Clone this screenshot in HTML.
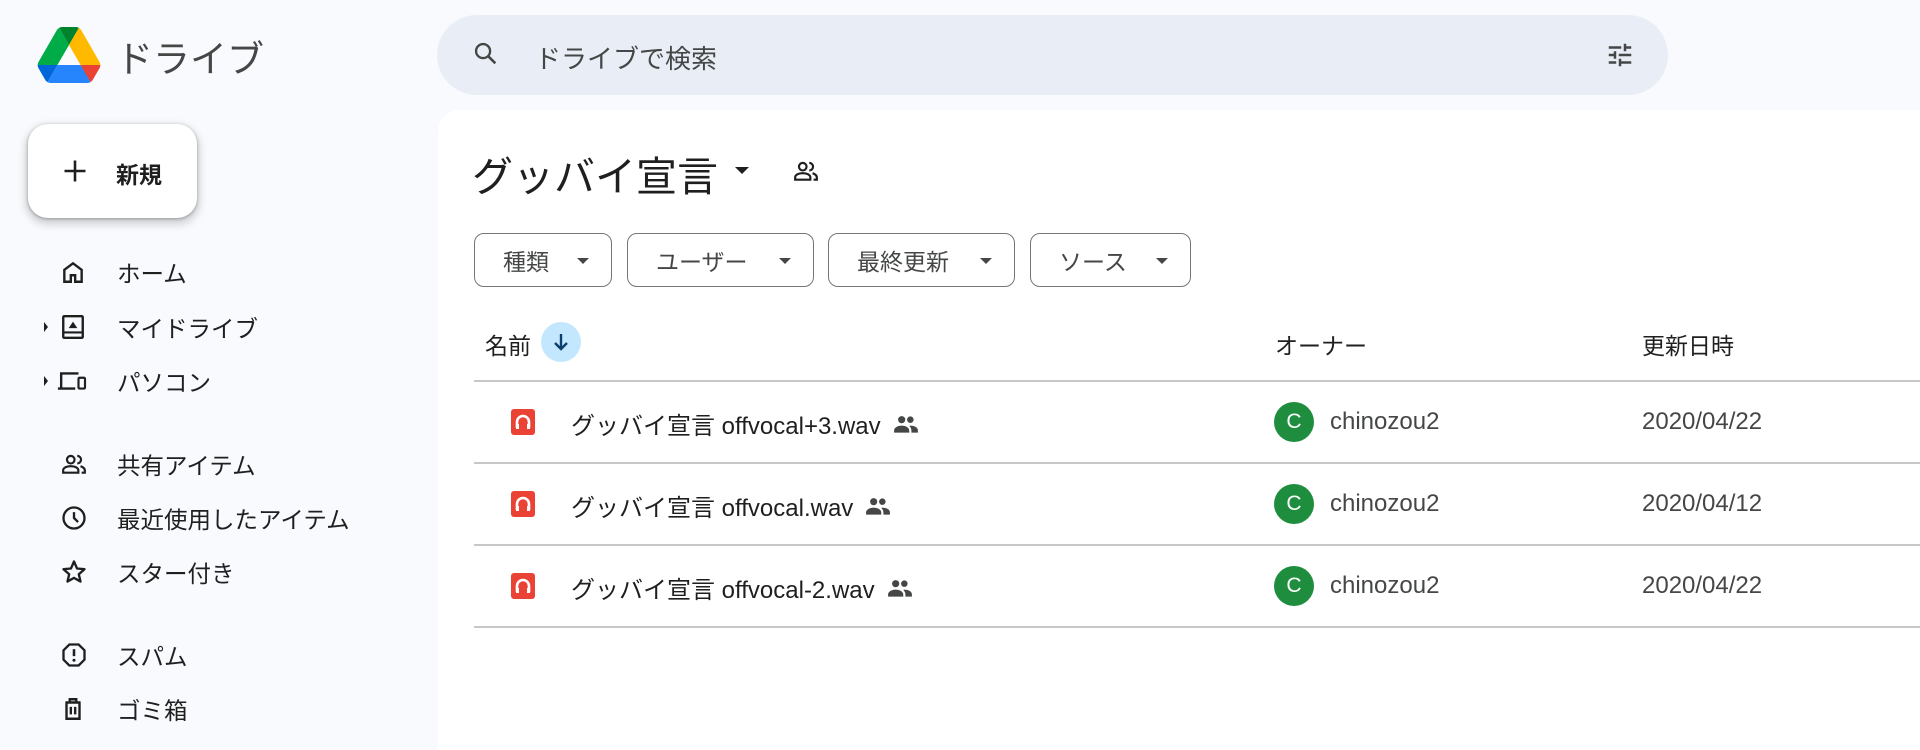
<!DOCTYPE html>
<html><head><meta charset="utf-8"><style>
*{margin:0;padding:0;box-sizing:border-box}
body{width:1920px;height:730px;overflow:hidden;background:#f8fafd;font-family:"Liberation Sans","Noto Sans CJK JP",sans-serif;color:#1f1f1f;position:relative}
.a{position:absolute}
.nav{position:absolute;left:0;height:40px;display:flex;align-items:center;font-size:23.5px;color:#1f1f1f}
.nav svg{position:absolute;left:60px}
.nav span{position:absolute;left:117px;white-space:nowrap}
.chip{position:absolute;top:233px;height:54px;border:1.5px solid #747775;border-radius:10px;font-size:23px;color:#444746;display:flex;align-items:center;padding-left:28px}
.chip i{position:absolute;right:22px;top:24px;border-left:6px solid transparent;border-right:6px solid transparent;border-top:6px solid #444746}
.line{position:absolute;left:474px;right:0;height:1.5px;background:#c7c7c7}
.fn{position:absolute;left:571px;font-size:24px;color:#1f1f1f;white-space:nowrap;display:flex;align-items:center;gap:12px}
.fi{position:absolute;left:511px;width:24px;height:26px;background:#ea4335;border-radius:3px}
.av{position:absolute;left:1274px;width:40px;height:40px;border-radius:50%;background:#1e8e3e;color:#fff;font-size:21px;display:flex;align-items:center;justify-content:center}
.ow{position:absolute;left:1330px;font-size:24px;color:#444746}
.dt{position:absolute;left:1642px;font-size:24px;color:#444746}
</style></head><body>
<svg class="a" style="left:37px;top:27px" width="64" height="56" viewBox="0 0 87.3 78"><path d="M6.6 66.85l3.850 6.65c.8 1.4 1.95 2.5 3.3 3.3L27.5 53H0c0 1.55.4 3.1 1.2 4.5z" fill="#0066da"/><path d="M43.65 25L29.9 1.2c-1.35.8-2.5 1.9-3.3 3.3L1.2 48.5A9 9 0 000 53h27.5z" fill="#00ac47"/><path d="M73.55 76.8c1.35-.8 2.5-1.9 3.3-3.3l1.6-2.75 7.65-13.25c.8-1.4 1.2-2.950 1.2-4.5H59.8l5.85 11.5z" fill="#ea4335"/><path d="M43.65 25L57.4 1.2C56.05.4 54.5 0 52.9 0H34.4c-1.6 0-3.15.45-4.5 1.2z" fill="#00832d"/><path d="M59.8 53H27.5L13.75 76.8c1.35.8 2.9 1.2 4.5 1.2h50.8c1.6 0 3.15-.45 4.5-1.2z" fill="#2684fc"/><path d="M73.4 26.5L60.7 4.5c-.8-1.4-1.95-2.5-3.3-3.3L43.65 25 59.8 53h27.45c0-1.55-.4-3.1-1.2-4.5z" fill="#ffba00"/></svg>
<div class="a" style="left:116px;top:29px;font-size:37px;color:#444746">ドライブ</div>
<div class="a" style="left:437px;top:15px;width:1231px;height:80px;border-radius:40px;background:#e9eef6"></div>
<svg class="a" style="left:472px;top:40px" width="28" height="28" viewBox="0 0 24 24"><circle cx="9.5" cy="9.5" r="6" fill="none" stroke="#444746" stroke-width="2"/><path d="M14 14l6 6" stroke="#444746" stroke-width="2.2"/></svg>
<div class="a" style="left:535px;top:39px;font-size:26px;color:#444746">ドライブで検索</div>
<svg class="a" style="left:1605px;top:40px" width="30" height="30" viewBox="0 0 24 24" fill="#444746"><path d="M3 17v2h6v-2zm0-12v2h10V5zm10 16v-2h8v-2h-8v-2h-2v6zM7 9v2H3v2h4v2h2V9zm14 4v-2H11v2zm-6-4h2V7h4V5h-4V3h-2z"/></svg>
<div class="a" style="left:438px;top:110px;width:1500px;height:640px;background:#fff;border-radius:22px 0 0 0"></div>
<div class="a" style="left:28px;top:124px;width:169px;height:94px;background:#fff;border-radius:20px;box-shadow:0 1px 3px rgba(0,0,0,.3),0 4px 8px 3px rgba(0,0,0,.15)"></div>
<svg class="a" style="left:61px;top:157px" width="28" height="28" viewBox="0 0 24 24"><path d="M12 3v18M3 12h18" stroke="#1f1f1f" stroke-width="2.2"/></svg>
<div class="a" style="left:116px;top:156px;font-size:23px;font-weight:bold;color:#1f1f1f">新規</div>

<div class="nav" style="top:252px"><svg width="26" height="26" viewBox="0 0 24 24"><path d="M4 21V10l8-6 8 6v11h-6v-6h-4v6z" fill="none" stroke="#1f1f1f" stroke-width="2.2"/></svg><span>ホーム</span></div>
<div class="nav" style="top:307px"><i class="a" style="left:44px;top:15px;border-top:5px solid transparent;border-bottom:5px solid transparent;border-left:4px solid #1f1f1f"></i><svg width="26" height="26" viewBox="0 0 24 24"><rect x="3" y="2" width="18" height="20" rx="1" fill="none" stroke="#1f1f1f" stroke-width="2.2"/><path d="M3 17h18" stroke="#1f1f1f" stroke-width="2"/><path d="M8 13l4-6 4 6z" fill="#1f1f1f"/></svg><span>マイドライブ</span></div>
<div class="nav" style="top:361px"><i class="a" style="left:44px;top:15px;border-top:5px solid transparent;border-bottom:5px solid transparent;border-left:4px solid #1f1f1f"></i><svg width="32" height="26" viewBox="0 0 28 24" style="left:56px"><path d="M4 18V5h16M1 19h16" fill="none" stroke="#1f1f1f" stroke-width="2.2"/><rect x="20" y="9" width="6" height="10" rx="1" fill="none" stroke="#1f1f1f" stroke-width="2"/></svg><span>パソコン</span></div>
<div class="nav" style="top:444px"><svg width="28" height="26" viewBox="0 0 24 24"><circle cx="9" cy="8" r="3.5" fill="none" stroke="#1f1f1f" stroke-width="2"/><path d="M2 20v-2c0-2.5 3-4 7-4s7 1.5 7 4v2z" fill="none" stroke="#1f1f1f" stroke-width="2"/><path d="M15 4.5a3.5 3.5 0 010 7M18 14c2 .7 4 2 4 4v2h-3" fill="none" stroke="#1f1f1f" stroke-width="2"/></svg><span>共有アイテム</span></div>
<div class="nav" style="top:498px"><svg width="28" height="28" viewBox="0 0 24 24"><circle cx="12" cy="12" r="9" fill="none" stroke="#1f1f1f" stroke-width="2"/><path d="M12 7v5l3.5 3.5" fill="none" stroke="#1f1f1f" stroke-width="2"/></svg><span>最近使用したアイテム</span></div>
<div class="nav" style="top:552px"><svg width="28" height="28" viewBox="0 0 24 24"><path d="M12 3l2.6 6 6.4.6-4.9 4.3 1.5 6.3L12 17l-5.6 3.2 1.5-6.3L3 9.6 9.4 9z" fill="none" stroke="#1f1f1f" stroke-width="2" stroke-linejoin="round"/></svg><span>スター付き</span></div>
<div class="nav" style="top:635px"><svg width="28" height="28" viewBox="0 0 24 24"><path d="M8 3h8l5 5v8l-5 5H8l-5-5V8z" fill="none" stroke="#1f1f1f" stroke-width="2"/><path d="M12 7v6" stroke="#1f1f1f" stroke-width="2.2"/><circle cx="12" cy="16.5" r="1.3" fill="#1f1f1f"/></svg><span>スパム</span></div>
<div class="nav" style="top:689px"><svg width="26" height="26" viewBox="0 0 24 24"><path d="M5 6h14M9 6V3h6v3M6 6v15h12V6M10 10v7M14 10v7" fill="none" stroke="#1f1f1f" stroke-width="2.2"/></svg><span>ゴミ箱</span></div>

<div class="a" style="left:472px;top:143px;font-size:41px;color:#1f1f1f;white-space:nowrap">グッバイ宣言</div>
<i class="a" style="left:735px;top:167px;border-left:7px solid transparent;border-right:7px solid transparent;border-top:7px solid #1f1f1f"></i>
<svg class="a" style="left:792px;top:158px" width="28" height="26" viewBox="0 0 24 24"><circle cx="9" cy="8" r="3.5" fill="none" stroke="#1f1f1f" stroke-width="2"/><path d="M2 20v-2c0-2.5 3-4 7-4s7 1.5 7 4v2z" fill="none" stroke="#1f1f1f" stroke-width="2"/><path d="M15 4.5a3.5 3.5 0 010 7M18 14c2 .7 4 2 4 4v2h-3" fill="none" stroke="#1f1f1f" stroke-width="2"/></svg>

<div class="chip" style="left:474px;width:138px">種類<i></i></div>
<div class="chip" style="left:627px;width:187px">ユーザー<i></i></div>
<div class="chip" style="left:828px;width:187px">最終更新<i></i></div>
<div class="chip" style="left:1030px;width:161px">ソース<i></i></div>

<div class="a" style="left:485px;top:327px;font-size:23px;color:#1f1f1f">名前</div>
<div class="a" style="left:541px;top:322px;width:40px;height:40px;border-radius:50%;background:#c2e7ff"></div>
<svg class="a" style="left:549px;top:330px" width="24" height="24" viewBox="0 0 24 24"><path d="M12 4v15M6 13l6 6 6-6" fill="none" stroke="#0b3f6e" stroke-width="2.4"/></svg>
<div class="a" style="left:1275px;top:327px;font-size:23px;color:#1f1f1f">オーナー</div>
<div class="a" style="left:1642px;top:327px;font-size:23px;color:#1f1f1f">更新日時</div>

<div class="line" style="top:380px"></div>
<div class="line" style="top:462px"></div>
<div class="line" style="top:544px"></div>
<div class="line" style="top:626px"></div>

<div class="fi" style="top:409px"><svg width="24" height="26" viewBox="0 0 24 26"><path d="M6 19v-6a6 6 0 0112 0v6" fill="none" stroke="#fff" stroke-width="2.6"/><rect x="5" y="15" width="3" height="5" fill="#fff"/><rect x="16" y="15" width="3" height="5" fill="#fff"/></svg></div>
<div class="fi" style="top:491px"><svg width="24" height="26" viewBox="0 0 24 26"><path d="M6 19v-6a6 6 0 0112 0v6" fill="none" stroke="#fff" stroke-width="2.6"/><rect x="5" y="15" width="3" height="5" fill="#fff"/><rect x="16" y="15" width="3" height="5" fill="#fff"/></svg></div>
<div class="fi" style="top:573px"><svg width="24" height="26" viewBox="0 0 24 26"><path d="M6 19v-6a6 6 0 0112 0v6" fill="none" stroke="#fff" stroke-width="2.6"/><rect x="5" y="15" width="3" height="5" fill="#fff"/><rect x="16" y="15" width="3" height="5" fill="#fff"/></svg></div>

<div class="fn" style="top:406px">グッバイ宣言 offvocal+3.wav <svg width="26" height="20" viewBox="0 0 24 18" fill="#444746"><circle cx="8" cy="5" r="3.3"/><circle cx="16" cy="5" r="3"/><path d="M1 17v-2c0-3 4-4.5 7-4.5s7 1.5 7 4.5v2zM16 10.5c3 0 7 1.3 7 4.5v2h-6v-2c0-1.7-.8-3.2-2-4.3z"/></svg></div>
<div class="fn" style="top:488px">グッバイ宣言 offvocal.wav <svg width="26" height="20" viewBox="0 0 24 18" fill="#444746"><circle cx="8" cy="5" r="3.3"/><circle cx="16" cy="5" r="3"/><path d="M1 17v-2c0-3 4-4.5 7-4.5s7 1.5 7 4.5v2zM16 10.5c3 0 7 1.3 7 4.5v2h-6v-2c0-1.7-.8-3.2-2-4.3z"/></svg></div>
<div class="fn" style="top:570px">グッバイ宣言 offvocal-2.wav <svg width="26" height="20" viewBox="0 0 24 18" fill="#444746"><circle cx="8" cy="5" r="3.3"/><circle cx="16" cy="5" r="3"/><path d="M1 17v-2c0-3 4-4.5 7-4.5s7 1.5 7 4.5v2zM16 10.5c3 0 7 1.3 7 4.5v2h-6v-2c0-1.7-.8-3.2-2-4.3z"/></svg></div>

<div class="av" style="top:402px">C</div><div class="ow" style="top:408px">chinozou2</div><div class="dt" style="top:408px">2020/04/22</div>
<div class="av" style="top:484px">C</div><div class="ow" style="top:490px">chinozou2</div><div class="dt" style="top:490px">2020/04/12</div>
<div class="av" style="top:566px">C</div><div class="ow" style="top:572px">chinozou2</div><div class="dt" style="top:572px">2020/04/22</div>
</body></html>
